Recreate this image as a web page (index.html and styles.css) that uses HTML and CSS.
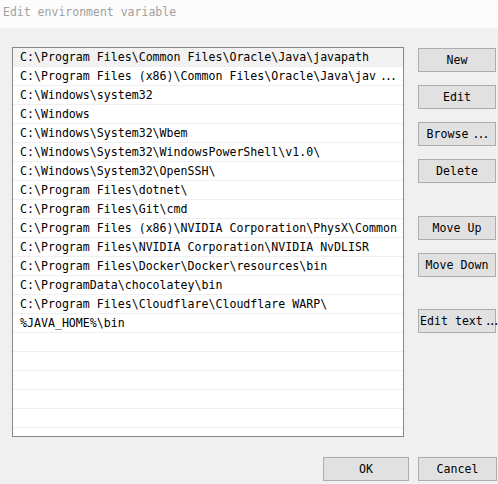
FILE: index.html
```html
<!DOCTYPE html>
<html>
<head>
<meta charset="utf-8">
<link rel="stylesheet" href="styles.css">
</head>
<body>
<div class="titlebar">Edit environment variable</div>
<div class="main">
  <div class="listbox">
    <div class="row selected">C:\Program Files\Common Files\Oracle\Java\javapath</div>
    <div class="row">C:\Program Files (x86)\Common Files\Oracle\Java\jav<span class="dots">...</span></div>
    <div class="row">C:\Windows\system32</div>
    <div class="row">C:\Windows</div>
    <div class="row">C:\Windows\System32\Wbem</div>
    <div class="row">C:\Windows\System32\WindowsPowerShell\v1.0\</div>
    <div class="row">C:\Windows\System32\OpenSSH\</div>
    <div class="row">C:\Program Files\dotnet\</div>
    <div class="row">C:\Program Files\Git\cmd</div>
    <div class="row">C:\Program Files (x86)\NVIDIA Corporation\PhysX\Common</div>
    <div class="row">C:\Program Files\NVIDIA Corporation\NVIDIA NvDLISR</div>
    <div class="row">C:\Program Files\Docker\Docker\resources\bin</div>
    <div class="row">C:\ProgramData\chocolatey\bin</div>
    <div class="row">C:\Program Files\Cloudflare\Cloudflare WARP\</div>
    <div class="row">%JAVA_HOME%\bin</div>
    <div class="row"></div>
    <div class="row"></div>
    <div class="row"></div>
    <div class="row"></div>
    <div class="row"></div>
    <div class="row"></div>
  </div>
  <div class="buttons">
    <div class="btn">New</div>
    <div class="btn">Edit</div>
    <div class="btn">Browse<span class="dots">...</span></div>
    <div class="btn">Delete</div>
    <div class="btn group">Move Up</div>
    <div class="btn">Move Down</div>
    <div class="btn group2 left">Edit text<span class="dots tight">...</span></div>
  </div>
</div>
<div class="footer">
  <div class="btn ok">OK</div>
  <div class="btn cancel">Cancel</div>
</div>
</body>
</html>
```

FILE: styles.css
```css
html, body {
  margin: 0;
  padding: 0;
  background: #f0f0f0;
  overflow: hidden;
  width: 498px;
  height: 484px;
  font-family: "DejaVu Sans Mono", "Liberation Mono", monospace;
  font-size: 11.6px;
  color: #000;
}
.titlebar {
  height: 28px;
  background: #fcfcfc;
  color: #a0a0a0;
  padding-left: 3px;
  line-height: 24px;
  font-size: 11.5px;
  box-sizing: border-box;
}
.main {
  display: flex;
  padding: 19px 0 0 12px;
}
.listbox {
  width: 392px;
  height: 390px;
  box-sizing: border-box;
  border: 1px solid #828790;
  background: #fff;
  overflow: hidden;
  flex: none;
}
.row {
  height: 18px;
  line-height: 18px;
  border-bottom: 1px solid #f0f0f0;
  padding-left: 7px;
  white-space: nowrap;
  overflow: hidden;
}
.row.selected {
  background: #f2f2f2;
}
.dots {
  margin-left: 4px;
  letter-spacing: -2px;
}
.dots.tight {
  margin-left: 2px;
  letter-spacing: -3px;
}
.buttons {
  margin-left: 14px;
  margin-top: 1px;
  display: flex;
  flex-direction: column;
  gap: 13px;
  flex: none;
}
.btn {
  width: 78px;
  height: 24px;
  box-sizing: border-box;
  background: #e1e1e1;
  border: 1px solid #adadad;
  text-align: center;
  line-height: 22px;
  white-space: nowrap;
  overflow: visible;
}
.btn.group {
  margin-top: 20px;
}
.btn.group2 {
  margin-top: 19px;
}
.btn.left {
  text-align: left;
  padding-left: 1px;
}
.footer {
  display: flex;
  justify-content: flex-end;
  gap: 9px;
  padding-right: 1px;
  margin-top: 20px;
}
.btn.ok {
  width: 86px;
}
.btn.cancel {
  width: 79px;
}
```
